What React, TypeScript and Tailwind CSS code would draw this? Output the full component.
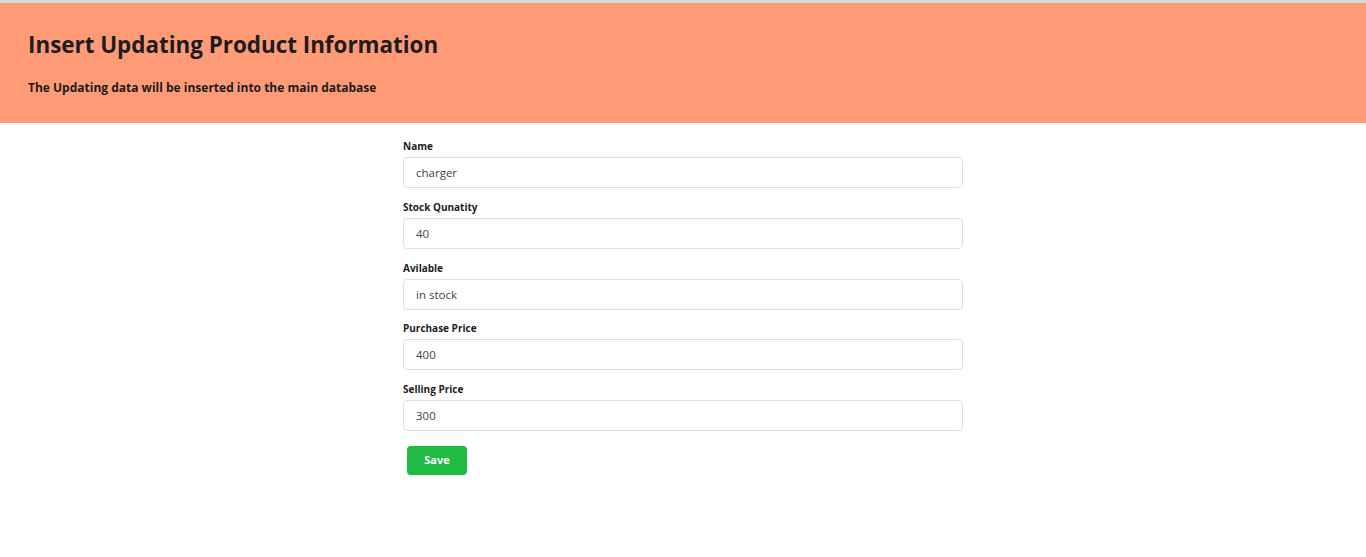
const fields = [
  { label: 'Name', value: 'charger' },
  { label: 'Stock Qunatity', value: '40' },
  { label: 'Avilable', value: 'in stock' },
  { label: 'Purchase Price', value: '400' },
  { label: 'Selling Price', value: '300' },
]

export default function App() {
  return (
    <div className="min-h-[557px] bg-white font-['Open_Sans',sans-serif] text-[#1b1c1d]">
      <div className="h-[3px] bg-[#d8d8d8]" />
      {/* Header */}
      <div className="h-[120px] bg-[#ff9a77] pl-[28px] pt-[27px]">
        <h1 className="text-[22.4px] font-bold leading-[30px]">Insert Updating Product Information</h1>
        <p className="mt-[19px] text-[12px] font-bold leading-[18px]">
          The Updating data will be inserted into the main database
        </p>
      </div>

      {/* Form */}
      <form className="mx-auto mt-[16px] w-[560px]" onSubmit={(e) => e.preventDefault()}>
        {fields.map((f) => (
          <div key={f.label} className="mb-[11.75px]">
            <label className="mb-[4px] block text-[10px] font-bold leading-[14px]">{f.label}</label>
            <input
              defaultValue={f.value}
              className="block h-[31px] w-full rounded-[4px] border border-[#dedede] px-[12px] text-[11.5px] text-[#444] outline-none"
            />
          </div>
        ))}
        <button
          type="submit"
          className="ml-[4px] mt-[3px] h-[29px] w-[60px] rounded-[4px] bg-[#21ba45] text-[11px] font-bold text-white"
        >
          Save
        </button>
      </form>
    </div>
  )
}
